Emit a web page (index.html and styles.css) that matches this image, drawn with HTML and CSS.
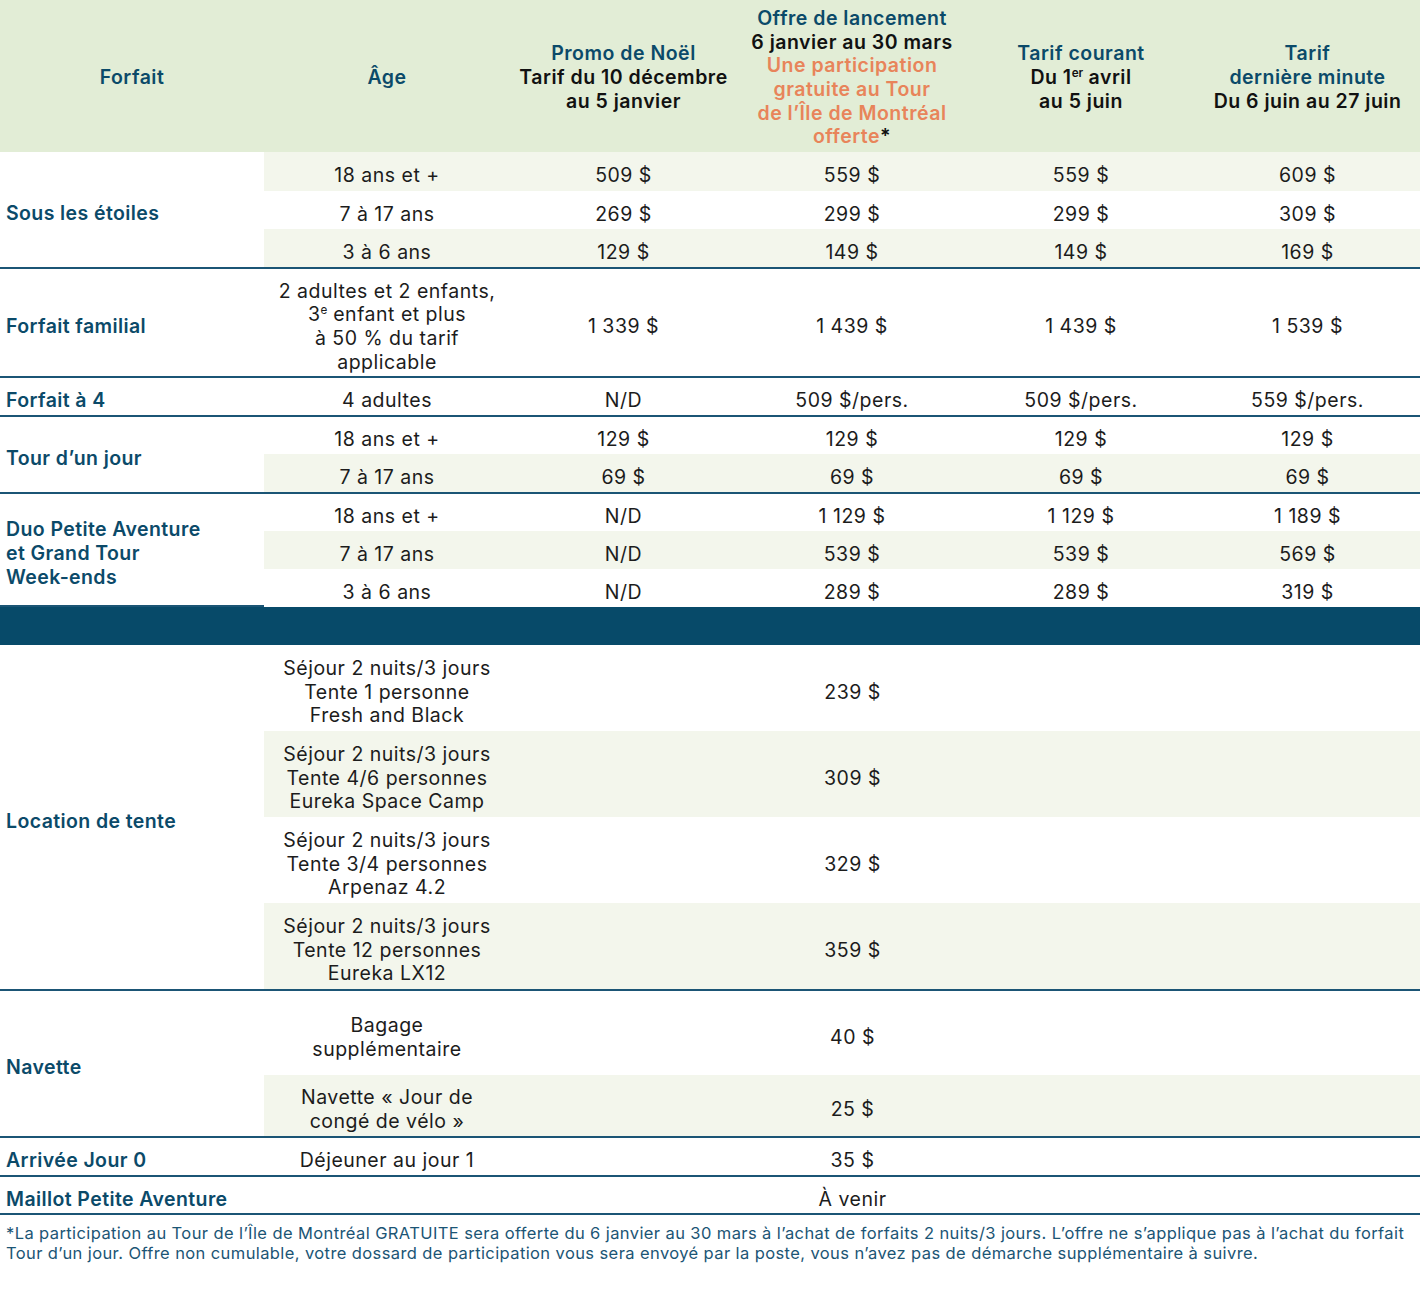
FILE: index.html
```html
<!DOCTYPE html>
<html lang="fr">
<head>
<meta charset="utf-8">
<title>Tarifs</title>
<link rel="stylesheet" href="styles.css">
</head>
<body>
<table class="tarifs">
  <colgroup>
    <col class="c-forfait">
    <col class="c-age">
    <col class="c-p1">
    <col class="c-p2">
    <col class="c-p3">
    <col class="c-p4">
  </colgroup>
  <thead>
    <tr class="head">
      <th class="h-name">Forfait</th>
      <th class="h-name">Âge</th>
      <th><span class="h-name">Promo de Noël</span><br>Tarif du 10 décembre<br>au 5 janvier</th>
      <th><span class="h-name">Offre de lancement</span><br>6 janvier au 30 mars<br><span class="h-orange">Une participation<br>gratuite au Tour<br>de l’Île de Montréal<br>offerte</span>*</th>
      <th><span class="h-name">Tarif courant</span><br>Du 1<sup>er</sup> avril<br>au 5 juin</th>
      <th><span class="h-name">Tarif<br>dernière minute</span><br>Du 6 juin au 27 juin</th>
    </tr>
  </thead>
  <tbody>
    <tr class="alt r39">
      <td class="label" rowspan="3">Sous les étoiles</td>
      <td>18 ans et +</td><td>509 $</td><td>559 $</td><td>559 $</td><td>609 $</td>
    </tr>
    <tr class="r38">
      <td>7 à 17 ans</td><td>269 $</td><td>299 $</td><td>299 $</td><td>309 $</td>
    </tr>
    <tr class="alt end r40">
      <td>3 à 6 ans</td><td>129 $</td><td>149 $</td><td>149 $</td><td>169 $</td>
    </tr>

    <tr class="end r109">
      <td class="label">Forfait familial</td>
      <td>2 adultes et 2 enfants,<br>3<sup>e</sup> enfant et plus<br>à 50 % du tarif<br>applicable</td>
      <td>1 339 $</td><td>1 439 $</td><td>1 439 $</td><td>1 539 $</td>
    </tr>

    <tr class="end r39">
      <td class="label">Forfait à 4</td>
      <td>4 adultes</td><td>N/D</td><td>509 $/pers.</td><td>509 $/pers.</td><td>559 $/pers.</td>
    </tr>

    <tr class="r37">
      <td class="label" rowspan="2">Tour d’un jour</td>
      <td>18 ans et +</td><td>129 $</td><td>129 $</td><td>129 $</td><td>129 $</td>
    </tr>
    <tr class="alt end r40">
      <td>7 à 17 ans</td><td>69 $</td><td>69 $</td><td>69 $</td><td>69 $</td>
    </tr>

    <tr class="r37">
      <td class="label" rowspan="3">Duo Petite Aventure<br>et Grand Tour<br>Week-ends</td>
      <td>18 ans et +</td><td>N/D</td><td>1 129 $</td><td>1 129 $</td><td>1 189 $</td>
    </tr>
    <tr class="alt r38">
      <td>7 à 17 ans</td><td>N/D</td><td>539 $</td><td>539 $</td><td>569 $</td>
    </tr>
    <tr class="r38 last">
      <td>3 à 6 ans</td><td>N/D</td><td>289 $</td><td>289 $</td><td>319 $</td>
    </tr>

    <tr class="band"><td colspan="6"></td></tr>

    <tr class="r86">
      <td class="label" rowspan="4">Location de tente</td>
      <td>Séjour 2 nuits/3 jours<br>Tente 1 personne<br>Fresh and Black</td>
      <td colspan="3">239 $</td><td></td>
    </tr>
    <tr class="alt r86">
      <td>Séjour 2 nuits/3 jours<br>Tente 4/6 personnes<br>Eureka Space Camp</td>
      <td colspan="3">309 $</td><td></td>
    </tr>
    <tr class="r86">
      <td>Séjour 2 nuits/3 jours<br>Tente 3/4 personnes<br>Arpenaz 4.2</td>
      <td colspan="3">329 $</td><td></td>
    </tr>
    <tr class="alt end r88">
      <td>Séjour 2 nuits/3 jours<br>Tente 12 personnes<br>Eureka LX12</td>
      <td colspan="3">359 $</td><td></td>
    </tr>

    <tr class="r84">
      <td class="label" rowspan="2">Navette</td>
      <td>Bagage<br>supplémentaire</td>
      <td colspan="3">40 $</td><td></td>
    </tr>
    <tr class="alt end r63">
      <td>Navette « Jour de<br>congé de vélo »</td>
      <td colspan="3">25 $</td><td></td>
    </tr>

    <tr class="end r39">
      <td class="label">Arrivée Jour 0</td>
      <td>Déjeuner au jour 1</td>
      <td colspan="3">35 $</td><td></td>
    </tr>

    <tr class="end r38">
      <td class="label">Maillot Petite Aventure</td>
      <td></td>
      <td colspan="3">À venir</td><td></td>
    </tr>
  </tbody>
</table>
<p class="note">*La participation au Tour de l’Île de Montréal GRATUITE sera offerte du 6 janvier au 30 mars à l’achat de forfaits 2 nuits/3 jours. L’offre ne s’applique pas à l’achat du forfait Tour d’un jour. Offre non cumulable, votre dossard de participation vous sera envoyé par la poste, vous n’avez pas de démarche supplémentaire à suivre.</p>
</body>
</html>
```

FILE: styles.css
```css
html, body {
  margin: 0;
  padding: 0;
  background: #ffffff;
}

body {
  font-family: Inter, "Open Sans", "Liberation Sans", sans-serif;
  color: #1c1c1c;
  width: 1420px;
}

.tarifs {
  width: 1420px;
  border-collapse: separate;
  border-spacing: 0;
  table-layout: fixed;
  font-size: 19.5px;
  letter-spacing: 0.5px;
  line-height: 23.7px;
}

.c-forfait { width: 264px; }
.c-age { width: 246px; }
.c-p1 { width: 227px; }
.c-p2 { width: 230px; }
.c-p3 { width: 228px; }
.c-p4 { width: 225px; }

.tarifs th,
.tarifs td {
  padding: 9px 2px 0;
  text-align: center;
  vertical-align: middle;
  white-space: nowrap;
}

.tarifs sup {
  font-size: 0.6em;
  line-height: 0;
  vertical-align: 0.6em;
  letter-spacing: 0;
}

.head {
  background: #e2edd6;
  height: 152px;
}

.head th {
  font-weight: 600;
  color: #111;
  padding: 4px 0 0;
}

.head .h-name {
  color: #0b4a69;
}

.head .h-orange {
  color: #e8845a;
}

.tarifs tbody tr.alt td {
  background: #f3f6ec;
}

.tarifs tbody tr.alt td.label {
  background: #ffffff;
}

.tarifs tbody tr.end td {
  border-bottom: 2px solid #1b5575;
}

.tarifs td.label {
  text-align: left;
  padding-left: 6px;
  font-weight: 600;
  letter-spacing: 0.4px;
  color: #0b4a69;
  border-bottom: 2px solid #1b5575;
}

.tarifs tr.last td {
  border-bottom: 0;
}

.r37 { height: 37px; }
.r38 { height: 38px; }
.r39 { height: 39px; }
.r40 { height: 40px; }
.r63 { height: 63px; }
.r84 { height: 84px; }
.r86 { height: 86px; }
.r88 { height: 88px; }
.r109 { height: 109px; }

.tarifs tbody tr.band {
  height: 38px;
}

.tarifs tbody tr.band td {
  background: #074a69;
  padding: 0;
}

.note {
  margin: 8px 0 0;
  padding: 0 6px;
  font-size: 16.5px;
  letter-spacing: 0.4px;
  line-height: 20px;
  color: #1b5575;
}
```
